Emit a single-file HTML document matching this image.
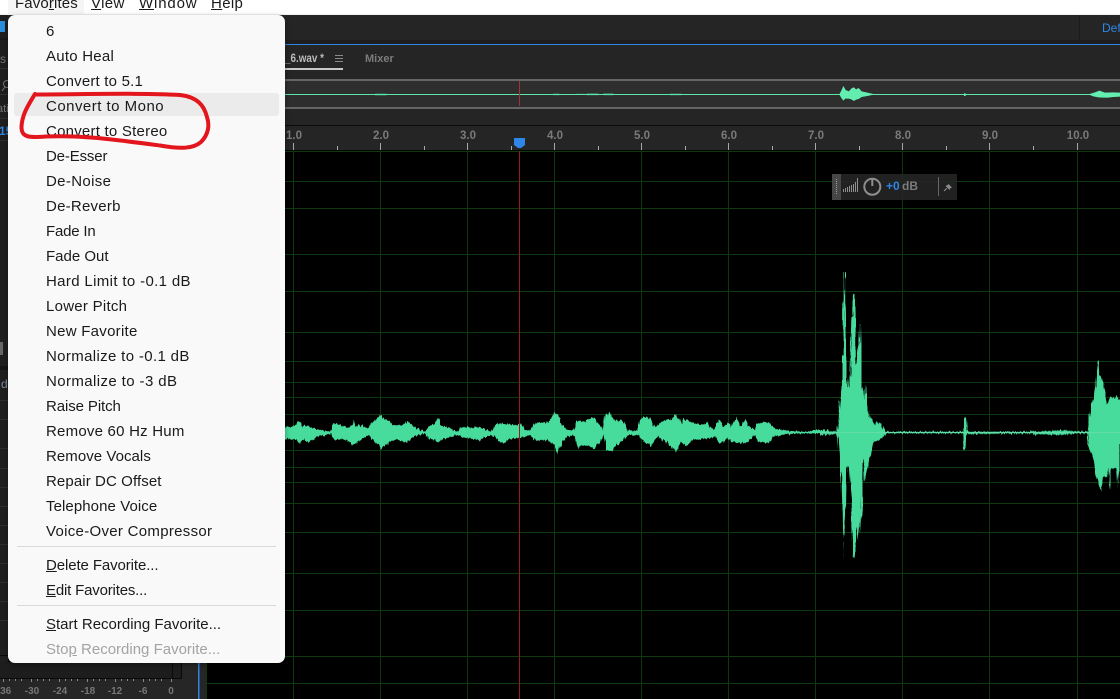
<!DOCTYPE html>
<html lang="en"><head><meta charset="utf-8"><title>Favorites menu</title>
<style>
html,body{margin:0;padding:0;background:#000;}
body{position:relative;width:1120px;height:699px;overflow:hidden;font-family:"Liberation Sans",sans-serif;}
svg.bg{position:absolute;left:0;top:0;}
.bar{position:absolute;left:0;top:0;width:1120px;height:14px;background:#fff;overflow:hidden;}
.bar .hov{position:absolute;left:8px;top:0;width:76px;height:14px;background:#f5f5f5;}
.bar span{position:absolute;top:-6px;font-size:15px;line-height:20px;color:#1a1a1a;white-space:nowrap;letter-spacing:.35px;}
.menu{position:absolute;left:8px;top:15px;width:277px;height:648px;background:#f9f9f9;border-radius:7px;box-shadow:0 2px 6px rgba(0,0,0,.35);}
.menu .hl{position:absolute;left:6px;top:78px;width:265px;height:23px;background:#ebebeb;border-radius:3px;}
.menu .i{position:absolute;left:38px;margin-top:1px;font-size:15px;line-height:20px;color:#1a1a1a;white-space:nowrap;letter-spacing:.35px;}
.menu .sep{position:absolute;left:9px;width:259px;height:1px;background:#d9d9d9;}
.menu .dis{color:#a3a3a3;}
</style></head>
<body>
<svg class="bg" width="1120" height="699" viewBox="0 0 1120 699" xmlns="http://www.w3.org/2000/svg">
<defs>
<filter id="j" filterUnits="userSpaceOnUse" x="270" y="250" width="860" height="330">
<feTurbulence type="fractalNoise" baseFrequency="0.55 0.03" numOctaves="2" seed="4"/>
<feDisplacementMap in="SourceGraphic" scale="5" xChannelSelector="A" yChannelSelector="G"/>
</filter>
</defs>
<rect width="1120" height="699" fill="#000"/>
<!-- chrome -->
<rect x="0" y="14" width="1120" height="1" fill="#f0f0f0"/>
<rect x="0" y="15" width="1120" height="25" fill="#252525"/>
<rect x="0" y="40" width="1120" height="4" fill="#1e1e1e"/>
<rect x="1079" y="15" width="1" height="25" fill="#1c1c1c"/>
<text x="1102" y="32" font-size="12" fill="#2e86e6" font-family="Liberation Sans">Default</text>
<rect x="285" y="44" width="835" height="1" fill="#2e86e6"/>
<rect x="285" y="45" width="835" height="80" fill="#252525"/>
<text x="285" y="62" font-size="12" font-weight="bold" fill="#bcbcbc" font-family="Liberation Sans" textLength="39" lengthAdjust="spacingAndGlyphs">_6.wav *</text>
<rect x="285" y="68" width="58" height="2" fill="#c8c8c8"/>
<path d="M335 55.500H343M335 58.500H343M335 61.500H343" stroke="#8a8a8a" stroke-width="1"/>
<text x="365" y="62" font-size="11" font-weight="bold" fill="#7c7c7c" font-family="Liberation Sans">Mixer</text>
<!-- overview -->
<rect x="285" y="79" width="835" height="2" fill="#666"/>
<rect x="285" y="81" width="835" height="26" fill="#2e2e2e"/>
<rect x="285" y="107" width="835" height="2" fill="#666"/>
<g transform="translate(280,0) scale(.33333)" fill="#3fae82" opacity=".5">
<path d="M285 280h35v7h-35zM820 280h18v6h-18zM890 281h25v4h-25zM920 279h35v7h-35zM970 279h30v7h-30zM1170 280h35v6h-35z"/>
</g>
<rect x="285" y="94" width="835" height="1" fill="#5de8a8"/>
<rect x="519" y="81" width="1" height="25" fill="#a83030"/>
<g transform="translate(780,0) scale(.33333)" fill="#63eeb0">
<path d="M178 283L184 272 190 258 197 270 206 274 216 264 222 262 228 268 236 264 245 274 262 278 285 283 262 288 245 291 236 297 228 299 222 303 214 298 206 296 196 296 190 302 184 294Z"/>
<path d="M552 280h5v8h-5z"/>
<path d="M925 283L945 277 958 272 975 278 1000 277 1020 278V290L1000 291 985 293 970 293 955 292 940 289Z"/>
</g>
<!-- ruler -->
<rect x="206" y="125" width="914" height="1" fill="#0a0a0a"/>
<rect x="206" y="126" width="914" height="24" fill="#252525"/>
<rect x="182" y="662" width="24" height="37" fill="#2a2a2a"/>
<path d="M293.500 143V150M380.500 143V150M467.500 143V150M554.500 143V150M641.500 143V150M728.500 143V150M815.500 143V150M902.500 143V150M989.500 143V150M1077.500 143V150" stroke="#a8a8a8"/>
<path d="M337.500 146V150M424.500 146V150M511.500 146V150M598.500 146V150M685.500 146V150M772.500 146V150M859.500 146V150M946.500 146V150M1033.500 146V150" stroke="#a8a8a8"/>
<g font-family="Liberation Sans" font-size="11.500" font-weight="bold" fill="#7a7a7a" text-anchor="middle">
<text x="294" y="139">1.0</text><text x="381" y="139">2.0</text><text x="468" y="139">3.0</text><text x="555" y="139">4.0</text><text x="642" y="139">5.0</text><text x="729" y="139">6.0</text><text x="816" y="139">7.0</text><text x="903" y="139">8.0</text><text x="990" y="139">9.0</text><text x="1078" y="139">10.0</text>
</g>
<!-- grid -->
<path d="M206 151.500H1120M206 181.500H1120M206 208.500H1120M206 254.500H1120M206 291.500H1120M206 332.500H1120M206 361.500H1120M206 382.500H1120M206 397.500H1120M206 414.500H1120M206 450.500H1120M206 467.500H1120M206 482.500H1120M206 503.500H1120M206 532.500H1120M206 573.500H1120M206 610.500H1120M206 656.500H1120M206 683.500H1120" stroke="#0e3a0e" stroke-width="1"/>
<path d="M206.500 151V699M293.500 151V699M380.500 151V699M467.500 151V699M554.500 151V699M641.500 151V699M728.500 151V699M815.500 151V699M902.500 151V699M989.500 151V699M1077.500 151V699" stroke="#0c380c" stroke-width="1"/>
<!-- waveform -->
<rect x="285" y="432" width="835" height="1" fill="#5cdca0"/>
<g fill="#46dc9c" filter="url(#j)">
<path transform="translate(280,380) scale(.33333)" d="M15 140L30 142 48 134 55 124 62 128 70 138 95 142 110 148 150 155 160 130 180 135 205 143 216 135 220 115 225 140 240 135 265 145 275 130 300 105 320 120 340 135 370 138 383 122 400 140 435 155 445 138 465 132 475 115 480 135 510 145 530 155 545 142 600 142 635 155 650 130 710 135 725 130 735 150 750 152 765 128 800 128 825 97 840 112 V205 L830 222 825 195 800 180 765 182 750 165 735 170 710 175 680 178 672 192 650 175 635 165 600 180 550 172 535 165 510 170 475 185 445 175 435 160 400 170 385 188 350 178 330 185 303 207 285 185 265 165 240 180 220 197 200 178 165 178 150 162 110 170 90 185 70 178 55 190 50 180 15 175Z"/>
<path transform="translate(560,380) scale(.33333)" d="M0 125L20 150 40 150 50 125 75 125 100 110 130 150 135 105 150 97 165 120 190 125 205 152 230 152 240 120 250 115 265 113 272 113 285 145 305 125 330 120 348 100 362 130 370 115 400 128 430 135 440 125 460 150 478 118 490 140 503 128 515 140 530 112 540 140 555 118 565 140 585 150 590 130 625 125 640 145 680 152 740 156 760 150 790 150 830 156V158L790 160 740 160 680 162 640 170 625 187 595 188 585 165 555 190 525 188 500 175 480 192 465 170 440 175 400 180 375 200 365 185 348 215 320 185 290 170 270 200 250 180 235 165 205 165 190 180 155 212 140 210 130 165 105 208 75 195 55 203 40 165 20 170 5 185 0 205Z"/>
<path transform="translate(820,260) scale(.33333)" d="M0 512L50 515 55 490 60 430 66 385 66 285 71 285 71 38 75 38 78 360 85 385 90 340 94 170 100 170 100 102 105 102 106 320 113 265 118 250 120 195 123 195 125 270 127 420 130 378 134 420 136 372 140 385 145 440 150 470 165 495 175 482 190 505 200 515 430 515 432 472 438 472 440 512 445 515 630 515 632 510 634 515 645 512 650 515 680 514 720 510 770 514 803 515 806 490 815 430 825 405 830 340 835 300 838 345 845 345 855 405 862 435 870 410 880 415 890 408 900 420V625L893 678 890 625 875 625 870 690 865 625 860 650 850 650 845 695 840 680 828 645 820 590 806 560 803 520 770 520 720 525 650 522 645 530 640 520 440 522 438 567 432 567 430 520 200 520 180 540 165 545 153 575 147 600 140 640 134 665 133 620 128 595 125 760 121 830 116 785 113 840 110 785 108 850 103 895 97 890 97 770 92 670 88 620 80 620 78 750 72 830 70 898 70 825 68 825 65 650 60 610 55 540 50 522 0 525Z"/>
</g>
<path d="M820 432.500H1120" stroke="#6fdcae" stroke-width="1" opacity=".7"/>
<!-- playhead -->
<rect x="519" y="151" width="1" height="548" fill="#9c1818"/>
<path d="M514 138H525V145L521 148H518L514 145Z" fill="#2e86e6"/>
<!-- HUD -->
<rect x="832" y="174" width="125" height="26" fill="rgba(38,38,38,.88)"/>
<rect x="832" y="174" width="9" height="26" fill="#474747"/>
<path d="M836.500 179V195" stroke="#a0a0a0" stroke-dasharray="1 1"/>
<path d="M843.500 189V192M845.500 188V192M847.500 187V192M849.500 186V192M851.500 185V192M853.500 184V192M855.500 182V192M857.500 178V192" stroke="#8e8e8e" stroke-width="1"/>
<circle cx="872.300" cy="186.700" r="8" fill="none" stroke="#8e8e8e" stroke-width="2"/>
<path d="M872.300 178.500V186" stroke="#8e8e8e" stroke-width="2"/>
<text x="886" y="190" font-size="12" font-weight="bold" fill="#2e86e6" font-family="Liberation Sans">+0</text>
<text x="902" y="190" font-size="12" font-weight="bold" fill="#7c7c7c" font-family="Liberation Sans">dB</text>
<rect x="938" y="177" width="1" height="19" fill="#666"/>
<path d="M948.500 184L952 187.500 950.500 188 949.500 190 945.500 186 947.500 185Z" fill="#8a8a8a"/>
<path d="M946.800 188.300L944 191" stroke="#8a8a8a" stroke-width="1.200"/>
<!-- left strip -->
<rect x="0" y="15" width="8" height="684" fill="#1f1f1f"/>
<rect x="0" y="21" width="5" height="11" fill="#2b8fe0"/>
<rect x="0" y="38" width="8" height="2" fill="#181818"/>
<rect x="0" y="68" width="8" height="1" fill="#333"/>
<rect x="0" y="94" width="8" height="1" fill="#333"/>
<rect x="0" y="118" width="8" height="1" fill="#2c2c2c"/>
<rect x="0" y="140" width="8" height="1" fill="#2c2c2c"/>
<text x="0" y="63" font-size="12" fill="#777" font-family="Liberation Sans">s</text>
<text x="-3" y="112" font-size="11" fill="#777" font-family="Liberation Sans">ati</text>
<text x="-1" y="135" font-size="12" font-weight="bold" fill="#2e86e6" font-family="Liberation Sans">15</text>
<circle cx="7" cy="84" r="3.500" fill="none" stroke="#777"/>
<path d="M5 87L2 91" stroke="#777"/>
<rect x="0" y="342" width="3" height="13" fill="#666"/>
<rect x="0" y="366" width="8" height="4" fill="#141414"/>
<text x="1" y="388" font-size="12" fill="#7f8ea0" font-family="Liberation Sans">d</text>
<path d="M0 400.500H8M0 419.500H8M0 448.500H8M0 468.500H8M0 487.500H8M0 506.500H8M0 525.500H8M0 544.500H8M0 563.500H8M0 582.500H8M0 601.500H8M0 620.500H8" stroke="#2f2f2f"/>
<path d="M0 655.500H8" stroke="#0a0a0a"/>
<!-- bottom panel -->
<rect x="0" y="662" width="206" height="37" fill="#262626"/>
<rect x="0" y="662" width="172" height="16" fill="#1d1d1d"/>
<rect x="173" y="662" width="8" height="16" fill="#1d1d1d"/>
<path d="M0 678.500H181.500V662M172.500 662V678" stroke="#0a0a0a" fill="none"/>
<rect x="198" y="662" width="1.500" height="37" fill="#2e86e6"/>
<path d="M3.500 679V682M9.500 679V681M15.500 679V681M21.500 679V681M31.500 679V682M37.500 679V681M43.500 679V681M49.500 679V681M59.500 679V682M65.500 679V681M71.500 679V681M77.500 679V681M87.500 679V682M93.500 679V681M99.500 679V681M105.500 679V681M115.500 679V682M121.500 679V681M127.500 679V681M133.500 679V681M143.500 679V682M149.500 679V681M155.500 679V681M161.500 679V681M171.500 679V682" stroke="#888"/>
<g font-family="Liberation Sans" font-size="10" font-weight="bold" fill="#777" text-anchor="middle">
<text x="4" y="694">-36</text><text x="32" y="694">-30</text><text x="60" y="694">-24</text><text x="88" y="694">-18</text><text x="115" y="694">-12</text><text x="143" y="694">-6</text><text x="171" y="694">0</text>
</g>
</svg>

<div class="bar"><div class="hov"></div>
<span style="left:15px;letter-spacing:.13px">Favo<u>r</u>ites</span>
<span style="left:91px"><u>V</u>iew</span>
<span style="left:139px;letter-spacing:.85px"><u>W</u>indow</span>
<span style="left:211px"><u>H</u>elp</span>
</div>

<div class="menu">
<div class="hl"></div>
<div class="i" style="top:6px">6</div>
<div class="i" style="top:31px;letter-spacing:.24px">Auto Heal</div>
<div class="i" style="top:56px;letter-spacing:.2px">Convert to 5.1</div>
<div class="i" style="top:81px;letter-spacing:.48px">Convert to Mono</div>
<div class="i" style="top:106px;letter-spacing:.23px">Convert to Stereo</div>
<div class="i" style="top:131px;letter-spacing:-.15px">De-Esser</div>
<div class="i" style="top:156px">De-Noise</div>
<div class="i" style="top:181px;letter-spacing:.24px">De-Reverb</div>
<div class="i" style="top:206px;letter-spacing:-.2px">Fade In</div>
<div class="i" style="top:231px;letter-spacing:0">Fade Out</div>
<div class="i" style="top:256px">Hard Limit to -0.1 dB</div>
<div class="i" style="top:281px;letter-spacing:.26px">Lower Pitch</div>
<div class="i" style="top:306px;letter-spacing:.27px">New Favorite</div>
<div class="i" style="top:331px">Normalize to -0.1 dB</div>
<div class="i" style="top:356px;letter-spacing:.4px">Normalize to -3 dB</div>
<div class="i" style="top:381px;letter-spacing:-.1px">Raise Pitch</div>
<div class="i" style="top:406px;letter-spacing:.22px">Remove 60 Hz Hum</div>
<div class="i" style="top:431px;letter-spacing:.05px">Remove Vocals</div>
<div class="i" style="top:456px;letter-spacing:.1px">Repair DC Offset</div>
<div class="i" style="top:481px;letter-spacing:.08px">Telephone Voice</div>
<div class="i" style="top:506px;letter-spacing:.3px">Voice-Over Compressor</div>
<div class="sep" style="top:531px"></div>
<div class="i" style="top:540px;letter-spacing:-.1px"><u>D</u>elete Favorite...</div>
<div class="i" style="top:565px;letter-spacing:-.18px"><u>E</u>dit Favorites...</div>
<div class="sep" style="top:590px"></div>
<div class="i" style="top:599px;letter-spacing:0"><u>S</u>tart Recording Favorite...</div>
<div class="i dis" style="top:624px;letter-spacing:0">Sto<u>p</u> Recording Favorite...</div>
</div>

<svg style="position:absolute;left:0;top:0;pointer-events:none" width="1120" height="699" viewBox="0 0 1120 699" xmlns="http://www.w3.org/2000/svg">
<path d="M35 94C29 104 22 114 21.500 127C21.500 137 28 138 46 136.500C80 135 110 139 160 145.500C180 149 193 149 201 142C208 135 210 126 207 117C204 105 197 97 180 95C150 93 100 94 35 94.500" fill="none" stroke="#e2161c" stroke-width="4" stroke-linecap="round" stroke-linejoin="round"/>
</svg>
</body></html>
